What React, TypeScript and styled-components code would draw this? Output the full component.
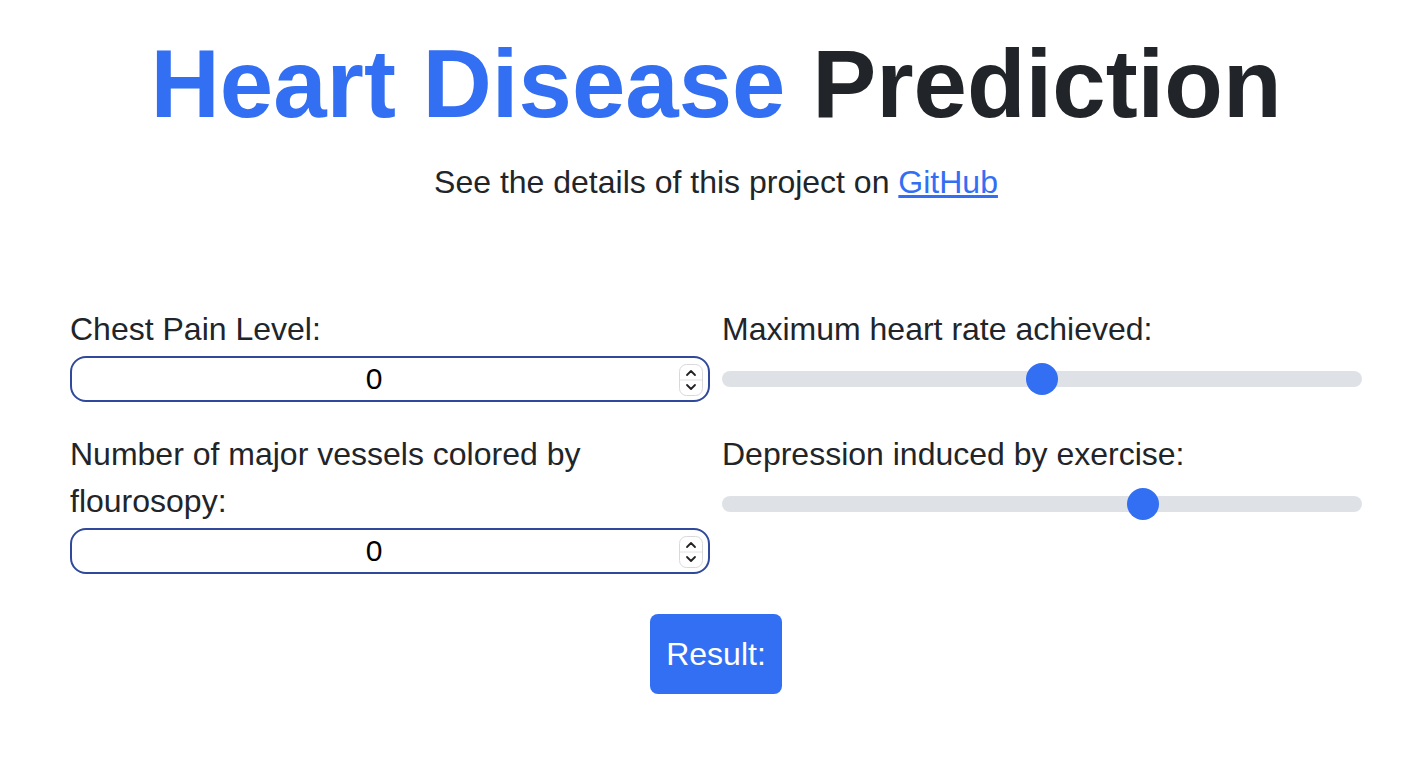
import React, { useState } from 'react'
import styled, { createGlobalStyle } from 'styled-components'

const blue = '#336ff3'
const ink = '#212529'

const GlobalStyle = createGlobalStyle`
  body {
    margin: 0;
    background: #fff;
    color: ${ink};
    font-family: "Liberation Sans", Arial, Helvetica, sans-serif;
  }
`

const Page = styled.div`
  width: 1292px;
  margin-left: 70px;
  padding-top: 26px;
`

const Header = styled.header`
  text-align: center;
`

const Title = styled.h1`
  margin: 0 0 17px;
  font-size: 96px;
  font-weight: 700;
  line-height: 1.2;
  color: ${ink};
`

const Accent = styled.span`
  color: ${blue};
`

const Subtitle = styled.p`
  margin: 0;
  font-size: 32px;
  line-height: 48px;

  a {
    color: ${blue};
    text-decoration: underline;
  }
`

const Form = styled.form`
  margin-top: 100px;
`

const Columns = styled.div`
  display: grid;
  grid-template-columns: 640px 640px;
  column-gap: 12px;
`

const Column = styled.div`
  display: flex;
  flex-direction: column;
  gap: 29px;
`

const Field = styled.div`
  display: flex;
  flex-direction: column;
`

const Label = styled.label`
  font-size: 32px;
  line-height: 47px;
  margin-bottom: 3px;
`

const NumberWrap = styled.div`
  position: relative;
  height: 46px;
`

const NumberInput = styled.input`
  box-sizing: border-box;
  width: 100%;
  height: 46px;
  border: 2px solid #31499b;
  border-radius: 16px;
  padding: 0 32px 0 0;
  font-family: "Liberation Sans", Arial, sans-serif;
  font-size: 30px;
  color: #000;
  text-align: center;
  background: #fff;
  outline: none;
  -moz-appearance: textfield;

  &::-webkit-inner-spin-button,
  &::-webkit-outer-spin-button {
    -webkit-appearance: none;
    margin: 0;
  }
`

const Spinner = styled.svg`
  position: absolute;
  right: 7px;
  top: 8px;
  pointer-events: none;
`

const Range = styled.input`
  -webkit-appearance: none;
  appearance: none;
  width: 100%;
  height: 46px;
  margin: 0;
  background: transparent;

  &::-webkit-slider-runnable-track {
    height: 16px;
    border-radius: 8px;
    background: #dee2e6;
  }

  &::-webkit-slider-thumb {
    -webkit-appearance: none;
    width: 32px;
    height: 32px;
    margin-top: -8px;
    border-radius: 50%;
    border: 0;
    background: ${blue};
  }
`

const Actions = styled.div`
  display: flex;
  justify-content: center;
  margin-top: 40px;
`

const Button = styled.button`
  width: 132px;
  height: 80px;
  border: 0;
  border-radius: 8px;
  background: ${blue};
  color: #fff;
  font-family: "Liberation Sans", Arial, sans-serif;
  font-size: 32px;
`

const SpinIcon = () => (
  <Spinner width="24" height="32" viewBox="0 0 24 32">
    <rect x="0.5" y="0.5" width="23" height="31" rx="7" fill="#fff" stroke="#d9d9d9" />
    <line x1="1" y1="16" x2="23" y2="16" stroke="#e2e2e2" />
    <path d="M8 11 L12 7 L16 11" fill="none" stroke="#222" strokeWidth="1.8" strokeLinecap="round" strokeLinejoin="round" />
    <path d="M8 21 L12 25 L16 21" fill="none" stroke="#222" strokeWidth="1.8" strokeLinecap="round" strokeLinejoin="round" />
  </Spinner>
)

const NumberField = ({ id, label, value, onChange }: { id: string; label: string; value: number; onChange: (v: number) => void }) => (
  <Field>
    <Label htmlFor={id}>{label}</Label>
    <NumberWrap>
      <NumberInput id={id} type="number" min={0} value={value} onChange={(e) => onChange(Number(e.target.value))} />
      <SpinIcon />
    </NumberWrap>
  </Field>
)

const SliderField = ({ id, label, min, max, step, value, onChange }: { id: string; label: string; min: number; max: number; step: number; value: number; onChange: (v: number) => void }) => (
  <Field>
    <Label htmlFor={id}>{label}</Label>
    <Range id={id} type="range" min={min} max={max} step={step} value={value} onChange={(e) => onChange(Number(e.target.value))} />
  </Field>
)

export default function App() {
  const [chestPain, setChestPain] = useState(0)
  const [vessels, setVessels] = useState(0)
  const [heartRate, setHeartRate] = useState(135)
  const [depression, setDepression] = useState(4)

  return (
    <>
      <GlobalStyle />
      <Page>
        <Header>
          <Title>
            <Accent>Heart Disease</Accent> Prediction
          </Title>
          <Subtitle>
            See the details of this project on <a href="#">GitHub</a>
          </Subtitle>
        </Header>
        <Form onSubmit={(e) => e.preventDefault()}>
          <Columns>
            <Column>
              <NumberField id="cp" label="Chest Pain Level:" value={chestPain} onChange={setChestPain} />
              <NumberField id="ca" label="Number of major vessels colored by flourosopy:" value={vessels} onChange={setVessels} />
            </Column>
            <Column>
              <SliderField id="thalach" label="Maximum heart rate achieved:" min={70} max={200} step={1} value={heartRate} onChange={setHeartRate} />
              <SliderField id="oldpeak" label="Depression induced by exercise:" min={0} max={6} step={0.1} value={depression} onChange={setDepression} />
            </Column>
          </Columns>
          <Actions>
            <Button type="submit">Result:</Button>
          </Actions>
        </Form>
      </Page>
    </>
  )
}
